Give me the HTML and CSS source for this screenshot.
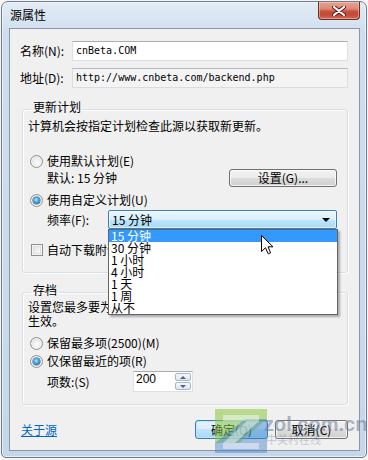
FILE: index.html
```html
<!DOCTYPE html>
<html lang="zh-CN">
<head>
<meta charset="utf-8">
<title>源属性</title>
<link rel="stylesheet" href="styles.css">
</head>
<body>
<div class="window">
  <div class="titlebar">
    <span class="title">源属性</span>
    <div class="close">
      <svg width="14" height="10" viewBox="0 0 14 10"><path d="M2 1 L12 9 M12 1 L2 9" stroke="#5a1a12" stroke-width="4" stroke-linecap="round"/><path d="M2 1 L12 9 M12 1 L2 9" stroke="#fff" stroke-width="2.2" stroke-linecap="round"/></svg>
    </div>
  </div>
  <div class="client">
    <div class="field-row">
      <span class="label">名称(N):</span>
      <div class="textbox">cnBeta.COM</div>
    </div>
    <div class="field-row second">
      <span class="label">地址(D):</span>
      <div class="textbox readonly">http://www.cnbeta.com/backend.php</div>
    </div>

    <fieldset class="group g-update">
      <legend>更新计划</legend>
      <p class="desc">计算机会按指定计划检查此源以获取新更新。</p>
      <div class="opt opt-default"><span class="radio"></span>使用默认计划(E)</div>
      <div class="default-row"><span>默认: 15 分钟</span><span class="btn btn-set">设置(G)...</span></div>
      <div class="opt opt-custom"><span class="radio checked"></span>使用自定义计划(U)</div>
      <div class="freq-row">
        <span class="freq-label">频率(F):</span>
        <div class="combo"><span>15 分钟</span><span class="arrow"></span></div>
      </div>
      <div class="opt opt-check"><span class="check"></span>自动下载附件文件</div>
    </fieldset>

    <fieldset class="group g-archive">
      <legend>存档</legend>
      <p class="desc2">设置您最多要为此源保留的项目数。更改将在下次更新时<br>生效。</p>
      <div class="opt opt-max"><span class="radio"></span>保留最多项(2500)(M)</div>
      <div class="opt opt-recent"><span class="radio checked"></span>仅保留最近的项(R)</div>
      <div class="count-row">
        <span class="count-label">项数:(S)</span>
        <div class="spin">
          <span class="spin-value">200</span>
          <span class="spin-btns">
            <span class="spin-btn"><span class="tri up"></span></span>
            <span class="spin-btn"><span class="tri down"></span></span>
          </span>
        </div>
      </div>
    </fieldset>

    <div class="footer">
      <a class="link" href="#">关于源</a>
      <div class="buttons">
        <span class="btn btn-default">确定(O)</span>
        <span class="btn">取消(C)</span>
      </div>
    </div>

    <ul class="dropdown">
      <li class="sel">15 分钟</li>
      <li>30 分钟</li>
      <li>1 小时</li>
      <li>4 小时</li>
      <li>1 天</li>
      <li>1 周</li>
      <li>从不</li>
    </ul>

    <svg class="cursor" width="13" height="20" viewBox="0 0 13 20">
      <path d="M0.5 0.5 L0.5 16.5 L4.5 12.8 L7.2 18.8 L9.6 17.8 L7 11.8 L12 11.8 Z" fill="#fff" stroke="#000" stroke-width="1" stroke-linejoin="miter"/>
    </svg>
  </div>

  <div class="watermark">
    <svg class="wm-logo" width="52" height="44" viewBox="0 0 52 44">
      <polygon points="0,0 52,0 52,10 24,34 0,34" fill="#8cc63f" opacity="0.55"/>
      <polygon points="0,34 30,10 52,10 52,44 0,44" fill="#3f7fc8" opacity="0.45"/>
      <polygon points="8,6 44,6 44,12 20,34 44,34 44,40 8,40 8,34 32,12 8,12" fill="#fff" opacity="0.45"/>
    </svg>
    <div class="wm-text">
      <span class="wm-url">zol.com.cn</span>
      <span class="wm-cn">中关村在线</span>
    </div>
  </div>
</div>
</body>
</html>
```

FILE: styles.css
```css
* { box-sizing: border-box; }

html, body {
  margin: 0;
  padding: 0;
  background: #f4f4f4;
}

body {
  font-family: "Noto Sans CJK SC", "Noto Sans", sans-serif;
  font-size: 12px;
  color: #000;
}

.window {
  position: relative;
  margin: 1px 0 0 1px;
  width: 366px;
  height: 457px;
  border: 1px solid #6d7b8a;
  border-radius: 7px 7px 5px 5px;
  background: linear-gradient(to bottom, #e3ecf6 0%, #cfdeee 30px, #c6d7ea 100%);
  box-shadow: inset 0 0 0 1px rgba(255,255,255,0.55);
  padding: 0 6px 6px 7px;
  display: flex;
  flex-direction: column;
}

.titlebar {
  height: 26px;
  display: flex;
  align-items: flex-start;
  flex: none;
}

.title {
  margin: 6px 0 0 1px;
  line-height: 14px;
  font-size: 12px;
}

.close {
  margin-left: auto;
  width: 42px;
  height: 18px;
  border: 1px solid #6e2a22;
  border-top: none;
  border-radius: 0 0 4px 4px;
  background: linear-gradient(to bottom, #e8a493 0%, #d98a77 40%, #c5503d 55%, #c24a37 75%, #d06a54 100%);
  box-shadow: inset 0 0 0 1px rgba(255,210,200,0.5);
  display: flex;
  align-items: center;
  justify-content: center;
}

.client {
  position: relative;
  flex: 1;
  border: 1px solid #8a98a7;
  background: #f0f0f0;
  padding: 12px 11px 10px 10px;
  display: flex;
  flex-direction: column;
}

.field-row {
  display: flex;
  align-items: center;
  height: 20px;
}
.field-row.second { margin-top: 7px; }

.label {
  width: 52px;
  flex: none;
  line-height: 14px;
}

.textbox {
  flex: 1;
  height: 20px;
  border: 1px solid #dbdfe6;
  border-top-color: #abadb3;
  background: #fff;
  font-family: "DejaVu Sans Mono", "Liberation Mono", monospace;
  font-size: 10px;
  line-height: 18px;
  padding-left: 3px;
  white-space: nowrap;
  overflow: hidden;
}
.textbox.readonly {
  background: #f4f4f4;
  border-color: #d9dce2;
  border-top-color: #b5b8be;
}

/* group boxes */
.group {
  margin: 13px 0 0 2px;
  border: 1px solid #d5dfe5;
  border-radius: 3px;
  box-shadow: inset 1px 1px 0 #fff, 1px 1px 0 #fff;
  padding: 2px 10px 15px 5px;
  min-width: 0;
}
.group legend {
  padding: 0 2px 4px 2px;
  margin-left: 3px;
  line-height: 12px;
}
.g-archive {
  margin-top: 11px;
  padding-top: 0;
  padding-bottom: 12px;
}

.desc {
  margin: 0;
  line-height: 14px;
  white-space: nowrap;
}
.desc2 {
  margin: 0;
  line-height: 14px;
  white-space: nowrap;
}

.opt {
  display: flex;
  align-items: center;
  height: 14px;
  line-height: 14px;
  white-space: nowrap;
  padding-left: 2px;
  gap: 4px;
}
.opt-default { margin-top: 21px; }
.opt-custom { margin-top: 6px; }
.opt-check { margin-top: 14px; padding-left: 3px; gap: 4px; }
.opt-max { margin-top: 8px; }
.opt-recent { margin-top: 4px; }

.radio {
  position: relative;
  width: 13px;
  height: 13px;
  flex: none;
  border-radius: 50%;
  border: 1px solid #8f9090;
  background: radial-gradient(circle at 55% 60%, #fdfdfd 0%, #f1f1f1 35%, #cfcfcf 100%);
  box-shadow: inset 0 0 0 1px rgba(255,255,255,0.6);
}
.radio.checked::after {
  content: "";
  position: absolute;
  left: 2px;
  top: 2px;
  width: 7px;
  height: 7px;
  border-radius: 50%;
  background: radial-gradient(circle at 45% 40%, #b8ecff 0%, #4aa8e2 40%, #1d5c9a 90%);
  box-shadow: 0 0 0 0.5px #2b5f8f;
}

.check {
  width: 12px;
  height: 12px;
  flex: none;
  border: 1px solid #8f8f8f;
  background: linear-gradient(135deg, #d8d8d8 0%, #f2f2f2 60%, #fff 100%);
  box-shadow: inset 0 0 0 1px #f5f5f5, inset 0 0 0 2px #dedede;
}

.default-row {
  display: flex;
  align-items: center;
  height: 18px;
  margin-top: 1px;
  padding-left: 19px;
  white-space: nowrap;
}
.default-row span:first-child { line-height: 14px; }

.btn {
  display: flex;
  align-items: center;
  justify-content: center;
  height: 19px;
  border: 1px solid #707070;
  border-radius: 3px;
  background: linear-gradient(to bottom, #f2f2f2 0%, #ebebeb 50%, #dddddd 50%, #cfcfcf 100%);
  box-shadow: inset 0 0 0 1px rgba(255,255,255,0.75);
  line-height: 14px;
  white-space: nowrap;
  color: #000;
}
.btn-set {
  margin-left: auto;
  width: 108px;
  height: 18px;
}

.freq-row {
  display: flex;
  align-items: center;
  height: 19px;
  margin-top: 3px;
  padding-left: 19px;
}
.freq-label {
  width: 61px;
  flex: none;
  line-height: 14px;
}
.combo {
  flex: 1;
  height: 19px;
  border: 1px solid #3c7fb1;
  border-radius: 2px;
  background: linear-gradient(to bottom, #eaf6fd 0%, #d9f0fc 50%, #bee6fd 50%, #a7d9f5 100%);
  box-shadow: inset 0 0 0 1px rgba(255,255,255,0.6);
  display: flex;
  align-items: center;
  padding: 0 6px 0 3px;
  line-height: 14px;
}
.combo .arrow {
  margin-left: auto;
  width: 0;
  height: 0;
  border-left: 4px solid transparent;
  border-right: 4px solid transparent;
  border-top: 4px solid #000;
}

.count-row {
  display: flex;
  align-items: center;
  height: 21px;
  margin-top: 3px;
  padding-left: 19px;
}
.count-label {
  width: 86px;
  flex: none;
  line-height: 14px;
}
.spin {
  width: 60px;
  height: 21px;
  border: 1px solid #dbdfe6;
  border-top-color: #abadb3;
  background: #fff;
  display: flex;
  align-items: stretch;
}
.spin-value {
  flex: 1;
  font-family: "Liberation Sans", Arial, sans-serif;
  font-size: 12px;
  line-height: 15px;
  padding-left: 2px;
}
.spin-btns {
  width: 17px;
  display: flex;
  flex-direction: column;
  gap: 1px;
  padding: 1px 1px 1px 0;
}
.spin-btn {
  flex: 1;
  border: 1px solid #aab6c4;
  border-radius: 2px;
  background: linear-gradient(to bottom, #f6f8fa, #dfe5ec);
  display: flex;
  align-items: center;
  justify-content: center;
}
.tri {
  width: 0;
  height: 0;
  border-left: 3px solid transparent;
  border-right: 3px solid transparent;
}
.tri.up { border-bottom: 3px solid #4d6185; }
.tri.down { border-top: 3px solid #4d6185; }

.footer {
  display: flex;
  align-items: center;
  height: 19px;
  margin-top: 15px;
}
.link {
  margin-left: 1px;
  color: #0066cc;
  text-decoration: underline;
  line-height: 14px;
}
.buttons {
  margin-left: auto;
  display: flex;
  gap: 7px;
}
.buttons .btn { width: 73px; }
.btn-default {
  border-color: #3c7fb1;
  background: linear-gradient(to bottom, #e5f4fc 0%, #d8eefb 50%, #bde4fa 50%, #a9d9f6 100%);
  box-shadow: inset 0 0 0 1px rgba(180,230,255,0.9);
}

/* open dropdown list of the combo */
.dropdown {
  position: absolute;
  left: 98px;
  top: 200px;
  width: 230px;
  height: 86px;
  margin: 0;
  padding: 0;
  list-style: none;
  background: #fff;
  border: 1px solid #646464;
  box-shadow: 2px 2px 2px rgba(0,0,0,0.3);
}
.dropdown li {
  height: 12px;
  line-height: 12px;
  padding-left: 2px;
  white-space: nowrap;
}
.dropdown li.sel {
  background: #3399ff;
  color: #fff;
}

.cursor {
  position: absolute;
  left: 251px;
  top: 206px;
}

/* watermark of the screenshot */
.watermark {
  position: absolute;
  left: 213px;
  top: 407px;
  display: flex;
  pointer-events: none;
}
.wm-text {
  display: flex;
  flex-direction: column;
  margin-left: -3px;
  margin-top: 6px;
}
.wm-url {
  font-family: "Liberation Sans", Arial, sans-serif;
  font-weight: bold;
  font-size: 20px;
  line-height: 18px;
  color: rgba(110, 125, 150, 0.55);
}
.wm-cn {
  font-size: 11px;
  line-height: 12px;
  margin-left: 2px;
  color: rgba(130, 140, 160, 0.45);
}
```
